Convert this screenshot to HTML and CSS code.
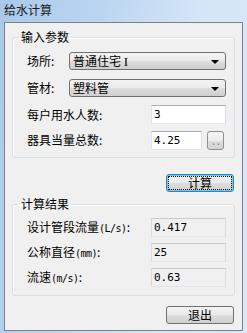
FILE: index.html
```html
<!DOCTYPE html>
<html lang="zh">
<head>
<meta charset="utf-8">
<title>给水计算</title>
<link rel="stylesheet" href="styles.css">
</head>
<body>
<div class="window">
  <div class="title">给水计算</div>
  <div class="panel">
    <fieldset class="group group-input">
      <legend>输入参数</legend>
      <div class="row">
        <span class="label">场所:</span>
        <div class="combo"><span class="combo-text">普通住宅 <span class="roman">I</span></span><span class="arrow"></span></div>
      </div>
      <div class="row">
        <span class="label">管材:</span>
        <div class="combo"><span class="combo-text">塑料管</span><span class="arrow"></span></div>
      </div>
      <div class="row row-field">
        <span class="label">每户用水人数:</span>
        <div class="edit">3</div>
      </div>
      <div class="row row-field">
        <span class="label">器具当量总数:</span>
        <div class="edit-pair">
          <div class="edit edit-short">4.25</div>
          <div class="dots-btn">..</div>
        </div>
      </div>
    </fieldset>
    <div class="btn-row btn-row-calc">
      <div class="btn btn-focus">计算</div>
    </div>
    <fieldset class="group group-result">
      <legend>计算结果</legend>
      <div class="row row-field">
        <span class="label">设计管段流量<span class="unit">(L/s)</span>:</span>
        <div class="edit readonly">0.417</div>
      </div>
      <div class="row row-field">
        <span class="label">公称直径<span class="unit">(mm)</span>:</span>
        <div class="edit readonly">25</div>
      </div>
      <div class="row row-field">
        <span class="label">流速<span class="unit">(m/s)</span>:</span>
        <div class="edit readonly">0.63</div>
      </div>
    </fieldset>
    <div class="btn-row btn-row-exit">
      <div class="btn">退出</div>
    </div>
  </div>
</div>
</body>
</html>
```
FILE: styles.css
```css
* { box-sizing: border-box; }
html, body { margin: 0; padding: 0; }
body {
  width: 247px;
  height: 333px;
  overflow: hidden;
  font-family: "Noto Sans CJK SC", "Noto Sans", sans-serif;
  font-size: 12px;
  color: #000;
}
.window {
  width: 247px;
  height: 333px;
  display: flex;
  flex-direction: column;
  background: linear-gradient(100deg, #a9c9ea 0%, #bcd6f1 35%, #d3e5f7 65%, #dbe9f8 100%);
}
.title {
  height: 22px;
  line-height: 19px;
  padding-left: 4px;
  font-size: 12px;
  color: #1a1a1a;
}
.panel {
  margin: 0 4px 2px 4px;
  height: 309px;
  border: 1px solid #7d8185;
  background: #f0f0f0;
  display: flex;
  flex-direction: column;
}
.group {
  margin: 6px 7px 0 7px;
  padding: 0 8px 0 14px;
  border: 1px solid #d5dfe5;
  border-radius: 3px;
  box-shadow: inset 1px 1px 0 #fff;
  min-width: 0;
  display: flex;
  flex-direction: column;
}
.group legend {
  padding: 0 2px;
  margin-left: -8px;
  line-height: 16px;
  height: 16px;
  font-size: 12px;
  color: #000;
}
.group-input { padding-top: 7px; padding-bottom: 7px; gap: 0; }
.group-result { margin-top: 4px; padding-top: 6px; padding-bottom: 8px; }
.row {
  display: flex;
  align-items: center;
  justify-content: space-between;
}
.group-input .row:nth-of-type(1) { margin-bottom: 9px; }
.group-input .row:nth-of-type(2) { margin-bottom: 8px; }
.group-input .row:nth-of-type(3) { margin-bottom: 6px; }
.group-result .row + .row { margin-top: 6px; }
.label {
  white-space: nowrap;
  line-height: 16px;
}
.unit {
  font-family: "DejaVu Sans Mono", monospace;
  font-size: 10px;
  letter-spacing: -0.5px;
}
.roman {
  font-family: "Liberation Serif", serif;
  font-size: 13px;
}
.combo {
  width: 157px;
  height: 18px;
  border: 1px solid #707070;
  border-radius: 3px;
  background: linear-gradient(#f3f3f3 0%, #ebebeb 48%, #dddddd 52%, #cfcfcf 100%);
  display: flex;
  align-items: center;
  justify-content: space-between;
  padding: 0 6px 0 3px;
}
.combo-text { line-height: 16px; }
.arrow {
  width: 0;
  height: 0;
  border-left: 4px solid transparent;
  border-right: 4px solid transparent;
  border-top: 4px solid #000;
  margin-top: 1px;
}
.edit {
  width: 75px;
  height: 19px;
  background: #fff;
  border: 1px solid;
  border-color: #abadb3 #dbdfe6 #e3e9ef #e2e3ea;
  font-family: "DejaVu Sans Mono", monospace;
  font-size: 11px;
  line-height: 17px;
  padding-left: 2px;
  color: #000;
}
.edit.readonly {
  background: #f0f0f0;
  border-color: #c9cbcf #dcdde0 #e3e4e6 #d8d9dc;
}
.edit-pair {
  width: 75px;
  display: flex;
  align-items: center;
  gap: 5px;
}
.edit-short { width: 51px; }
.dots-btn {
  width: 17px;
  height: 19px;
  margin-top: 1px;
  border: 1px solid #8e8f8f;
  border-radius: 3px;
  background: linear-gradient(#f4f4f4 0%, #ececec 50%, #dedede 51%, #d2d2d2 100%);
  color: #8a8a8a;
  font-family: "DejaVu Sans Mono", monospace;
  font-size: 10px;
  line-height: 20px;
  text-align: center;
  letter-spacing: -1px;
}
.btn-row {
  display: flex;
  justify-content: flex-end;
  padding-right: 8px;
}
.btn-row-calc { margin-top: 16px; }
.btn-row-exit { margin-top: 10px; }
.btn {
  width: 68px;
  height: 18px;
  border: 1px solid #707070;
  border-radius: 3px;
  background: linear-gradient(#f2f2f2 0%, #ebebeb 48%, #dddddd 52%, #cfcfcf 100%);
  display: flex;
  align-items: center;
  justify-content: center;
  line-height: 16px;
  font-size: 12px;
}
.btn-focus {
  border-color: #3c7fb1;
  box-shadow: inset 0 0 0 1px #5fd0f5;
  outline: 1px dotted #000;
  outline-offset: -3px;
}
```
